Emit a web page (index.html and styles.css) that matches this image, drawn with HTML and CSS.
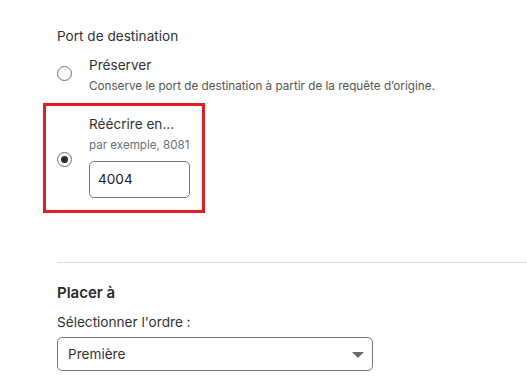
FILE: index.html
```html
<!DOCTYPE html>
<html lang="fr">
<head>
<meta charset="utf-8">
<link rel="stylesheet" href="styles.css">
</head>
<body>
<div class="page">
  <div class="group">
    <div class="legend">Port de destination</div>
    <div class="option option-plain">
      <span class="radio"></span>
      <div class="opt-body">
        <div class="opt-title">Préserver</div>
        <div class="opt-desc">Conserve le port de destination à partir de la requête d’origine.</div>
      </div>
    </div>
    <div class="option option-hl">
      <span class="radio checked"></span>
      <div class="opt-body">
        <div class="opt-title">Réécrire en...</div>
        <div class="opt-hint">par exemple, 8081</div>
        <div class="text-input">4004</div>
      </div>
    </div>
  </div>
  <div class="divider"></div>
  <div class="section">
    <div class="section-title">Placer à</div>
    <div class="field-label">Sélectionner l'ordre :</div>
    <div class="select">
      <span>Première</span>
      <svg class="caret" width="12" height="6" viewBox="0 0 12 6"><path d="M0 0h12L6 6z" fill="#6b6b6b"/></svg>
    </div>
  </div>
</div>
</body>
</html>
```
FILE: styles.css
```css
* { box-sizing: border-box; }
html, body { margin: 0; padding: 0; background: #fff; }
body {
  font-family: "Inter", "Liberation Sans", sans-serif;
  color: #313131;
  width: 527px;
  height: 392px;
  overflow: hidden;
}
.page { padding: 26px 0 0 57px; }
.legend { font-size: 13.6px; line-height: 20px; margin-bottom: 10px; }
.option { display: flex; align-items: center; }
.option-plain { align-items: flex-start; }
.option-plain .radio { margin-top: 10px; }
.radio {
  flex: none;
  width: 15px; height: 15px;
  border: 1px solid #6f6f6f;
  border-radius: 50%;
  margin-right: 17px;
  position: relative;
}
.radio.checked::after {
  content: "";
  position: absolute;
  left: 3px; top: 3px;
  width: 7px; height: 7px;
  border-radius: 50%;
  background: #2b2b2b;
}
.opt-title { font-size: 13.6px; line-height: 18px; }
.opt-desc { font-size: 11.7px; line-height: 16px; margin-top: 4px; color: #555; }
.opt-hint { font-size: 11.6px; line-height: 16px; margin-top: 4px; color: #66717c; }
.option-hl {
  margin: 9px 0 0 -14px;
  width: 162px;
  border: 3px solid #e31c25;
  padding: 9px 0 12px 11px;
}
.option-hl .radio { margin-top: 6px; }
.text-input {
  margin-top: 8px;
  width: 101px; height: 37px;
  border: 1px solid #777;
  border-radius: 5px;
  font-size: 13.6px;
  line-height: 35px;
  padding-left: 8px;
  color: #222;
}
.divider { margin-top: 49px; height: 1px; background: #dcdcdc; }
.section-title { margin-top: 20px; font-size: 15px; font-weight: 600; line-height: 20px; color: #2a2a2a; }
.field-label { margin-top: 10px; font-size: 13.6px; line-height: 18px; }
.select {
  margin-top: 6px;
  width: 316px; height: 34px;
  border: 1px solid #777;
  border-radius: 5px;
  display: flex; align-items: center; justify-content: space-between;
  padding: 0 8px 0 10px;
  font-size: 13.6px;
}
.caret { margin-top: 1px; }
```
